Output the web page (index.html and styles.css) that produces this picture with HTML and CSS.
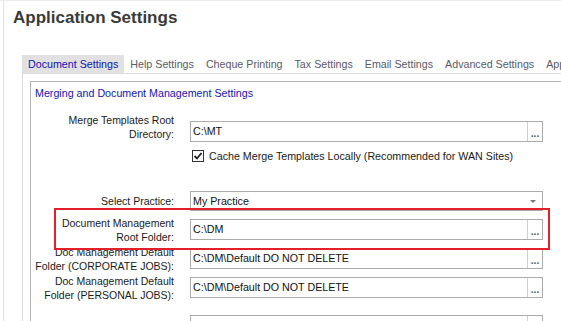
FILE: index.html
```html
<!DOCTYPE html>
<html lang="en">
<head>
  <meta charset="UTF-8">
  <title>Application Settings</title>
  <link rel="stylesheet" href="styles.css">
</head>
<body>
  <div class="frame">
    <h1 class="title">Application Settings</h1>

    <div class="tabs">
      <div class="tab active">Document Settings</div>
      <div class="tab">Help Settings</div>
      <div class="tab">Cheque Printing</div>
      <div class="tab">Tax Settings</div>
      <div class="tab">Email Settings</div>
      <div class="tab">Advanced Settings</div>
      <div class="tab">Application Settings</div>
    </div>

    <div class="panel">
      <div class="group">
        <div class="group-title">Merging and Document Management Settings</div>

        <div class="row row-first">
          <label class="label">Merge Templates Root<br>Directory:</label>
          <div class="field">
            <span class="value">C:\MT</span>
            <span class="browse">...</span>
          </div>
        </div>

        <div class="check-row">
          <span class="checkbox">
            <svg width="10" height="10" viewBox="0 0 10 10"><path d="M1.5 5 L4 7.5 L8.5 2" fill="none" stroke="#222" stroke-width="1.8"/></svg>
          </span>
          <span>Cache Merge Templates Locally (Recommended for WAN Sites)</span>
        </div>

        <div class="row row-select">
          <label class="label">Select Practice:</label>
          <div class="field select">
            <span class="value">My Practice</span>
            <span class="arrow"></span>
          </div>
        </div>

        <div class="row">
          <label class="label">Document Management<br>Root Folder:</label>
          <div class="field">
            <span class="value">C:\DM</span>
            <span class="browse">...</span>
          </div>
        </div>

        <div class="row">
          <label class="label">Doc Management Default<br>Folder (CORPORATE JOBS):</label>
          <div class="field">
            <span class="value">C:\DM\Default DO NOT DELETE</span>
            <span class="browse">...</span>
          </div>
        </div>

        <div class="row">
          <label class="label">Doc Management Default<br>Folder (PERSONAL JOBS):</label>
          <div class="field">
            <span class="value">C:\DM\Default DO NOT DELETE</span>
            <span class="browse">...</span>
          </div>
        </div>

        <div class="row row-last">
          <label class="label">Document Templates:</label>
          <div class="field">
            <span class="value"></span>
            <span class="browse">...</span>
          </div>
        </div>

        <div class="highlight"></div>
      </div>
    </div>
  </div>
</body>
</html>
```

FILE: styles.css
```css
body {
  margin: 0;
  height: 321px;
  overflow: hidden;
  background: #fff;
  border-top: 1px solid #ebebeb;
  font-family: 'Liberation Sans', Arial, sans-serif;
  font-size: 10.7px;
  color: #1a1a1a;
}
.frame {
  margin-left: 3px;
  border-left: 1px solid #e2e2e2;
  height: 330px;
  overflow: hidden;
}
.title {
  margin: 0;
  padding: 7px 0 0 9px;
  height: 47px;
  box-sizing: border-box;
  font-size: 17px;
  font-weight: bold;
  color: #3a3a3a;
}
.tabs {
  display: flex;
  margin-left: 18px;
  margin-top: 7px;
  height: 18px;
  border-bottom: 1px solid #dcdcdc;
  white-space: nowrap;
}
.tab {
  padding: 0 6px;
  line-height: 18px;
  color: #5a5a66;
}
.tab.active {
  background: #e1e1e1;
  color: #1414b4;
}
.panel {
  margin-left: 18px;
  border-left: 1px solid #dcdcdc;
  padding: 7px 0 0 7px;
}
.group {
  position: relative;
  width: 600px;
  height: 260px;
  border-top: 1px solid #b4b4b4;
  border-left: 1px solid #b4b4b4;
}
.group-title {
  color: #1414b4;
  padding: 4px 0 0 4px;
  line-height: 14px;
}
.row {
  display: flex;
  align-items: center;
  height: 29px;
}
.row-first {
  margin-top: 13px;
  align-items: flex-end;
}
.row-first .label {
  padding-bottom: 1px;
}
.row-select {
  margin-top: 28px;
  height: 24px;
  align-items: flex-start;
}
.row-select .label {
  padding-top: 3px;
}
.row-last {
  margin-top: 9px;
}
.label {
  width: 143px;
  text-align: right;
  line-height: 14px;
  font-size: 10.5px;
  white-space: nowrap;
  flex-shrink: 0;
}
.field {
  display: flex;
  align-items: stretch;
  margin-left: 16px;
  width: 353px;
  height: 21px;
  box-sizing: border-box;
  border: 1px solid #ababab;
  background: #fff;
}
.field.select {
  height: 20px;
}
.value {
  flex: 1;
  padding-left: 2px;
  line-height: 19px;
  color: #111;
}
.browse {
  width: 14px;
  border-left: 1px solid #cfcfcf;
  color: #4a5868;
  font-weight: bold;
  font-size: 10px;
  text-align center;
  text-align: center;
  line-height: 24px;
}
.arrow {
  width: 0;
  height: 0;
  margin: 8px 6px 0 0;
  border-left: 3px solid transparent;
  border-right: 3px solid transparent;
  border-top: 3px solid #777;
}
.check-row {
  display: flex;
  align-items: center;
  gap: 5px;
  margin: 7px 0 0 161px;
  height: 14px;
}
.checkbox {
  width: 12px;
  height: 12px;
  box-sizing: border-box;
  border: 1px solid #333;
  display: flex;
  align-items: center;
  justify-content: center;
}
.highlight {
  position: absolute;
  left: 23px;
  top: 126px;
  width: 496px;
  height: 42px;
  box-sizing: border-box;
  border: 2px solid #e3202a;
}
```
